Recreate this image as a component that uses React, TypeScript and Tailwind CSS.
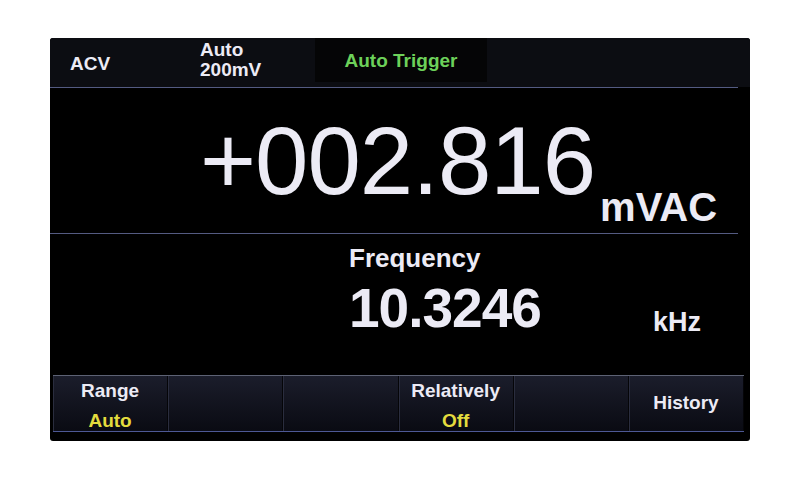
const SoftKey = ({ label, value }: { label: string; value?: string }) => (
  <div className="flex-1 flex flex-col items-center justify-center border-r border-[#050508] shadow-[inset_1px_0_0_#2a2d3e] bg-gradient-to-b from-[#1b1d2b] to-[#0a0b13] text-[19px] font-bold">
    {value !== undefined ? (
      <div className="flex flex-col items-center leading-[30px] self-stretch h-full">
        <span className="text-[#ecebf5]">{label}</span>
        <span className="text-[#e4dc3e]">{value}</span>
      </div>
    ) : (
      label && <span className="leading-none text-[#ecebf5] -mt-[3px]">{label}</span>
    )}
  </div>
);

export default function App() {
  return (
    <div
      className="w-[800px] h-[480px] bg-white pt-[38px] pl-[50px]"
      style={{ fontFamily: '"Liberation Sans", Arial, sans-serif' }}
    >
      <div className="w-[700px] h-[403px] bg-black rounded-[3px] flex flex-col overflow-hidden text-[#ecebf5]">
        {/* status bar */}
        <div className="h-[49px] flex items-start bg-[#0c0d12] font-bold text-[19px]">
          <div className="w-[150px] pl-[20px] pt-[16px] leading-none">ACV</div>
          <div className="w-[115px] pt-[2px] flex flex-col leading-[20px]">
            <span>Auto</span>
            <span>200mV</span>
          </div>
          <div className="w-[172px] h-[44px] bg-[#050506] flex items-center justify-center">
            <span className="leading-none text-[#6dd15a]">Auto Trigger</span>
          </div>
        </div>
        <div className="h-px mr-[12px] bg-[#545b82]" />

        {/* main reading */}
        <div className="h-[145px] flex items-start">
          <span className="ml-[150px] mt-[25px] text-[96px] leading-none tracking-[-1px]">+002.816</span>
          <span className="ml-[5px] mt-[99px] text-[40px] font-bold leading-none">mVAC</span>
        </div>
        <div className="h-px mr-[12px] bg-[#545b82]" />

        {/* secondary reading */}
        <div className="h-[141px] flex items-start font-bold">
          <div className="ml-[299px] w-[304px] pt-[11px] flex flex-col">
            <span className="text-[26px] leading-none">Frequency</span>
            <span className="mt-[10px] text-[55px] leading-none tracking-[-1px]">10.3246</span>
          </div>
          <span className="mt-[75px] text-[27px] leading-none">kHz</span>
        </div>

        {/* soft keys */}
        <div className="h-[57px] ml-[3px] mr-[6px] flex border-t border-[#5d6274] border-b border-b-[#4d5894]">
          <SoftKey label="Range" value="Auto" />
          <SoftKey label="" />
          <SoftKey label="" />
          <SoftKey label="Relatively" value="Off" />
          <SoftKey label="" />
          <SoftKey label="History" />
        </div>
      </div>
    </div>
  );
}
